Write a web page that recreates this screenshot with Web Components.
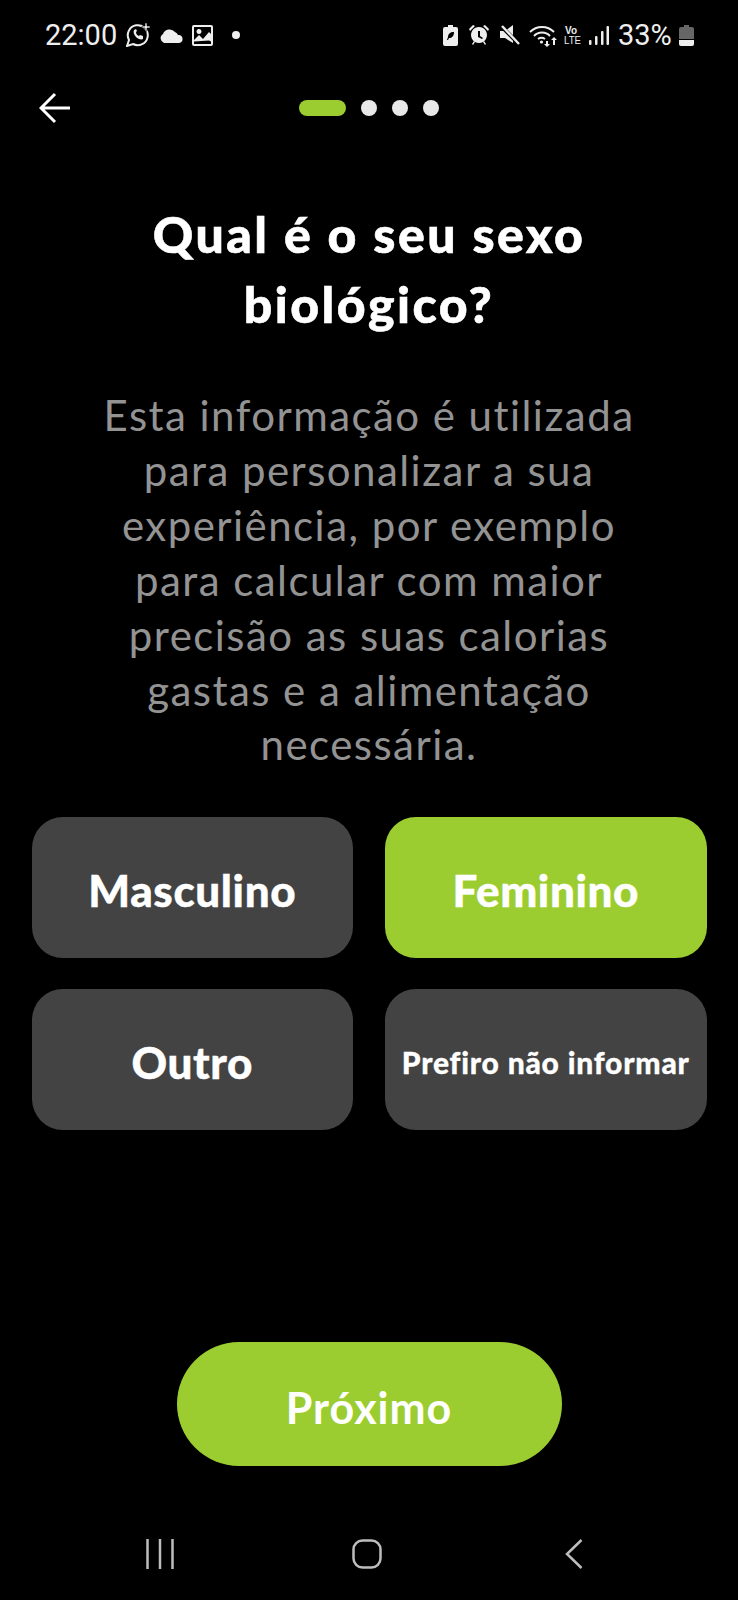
<!DOCTYPE html>
<html lang="pt">
<head>
<meta charset="utf-8">
<title>Sexo biológico</title>
<style>
  html, body { margin: 0; padding: 0; background: #000; }
  body { font-family: "Lato", "Noto Sans", sans-serif; color: #fff; }
</style>
</head>
<body>
<app-screen>
  <status-bar></status-bar>
  <top-nav></top-nav>
  <intro-text>
    <span slot="title">Qual é o seu sexo<br>biológico?</span>
    Esta informação é utilizada<br>para personalizar a sua<br>experiência, por exemplo<br>para calcular com maior<br>precisão as suas calorias<br>gastas e a alimentação<br>necessária.
  </intro-text>
  <choice-grid>
    <choice-button>Masculino</choice-button>
    <choice-button selected>Feminino</choice-button>
    <choice-button>Outro</choice-button>
    <choice-button small>Prefiro não informar</choice-button>
  </choice-grid>
  <next-button>Próximo</next-button>
  <nav-bar></nav-bar>
</app-screen>

<script>
class AppScreen extends HTMLElement {
  constructor() {
    super();
    this.attachShadow({ mode: 'open' });
    this.shadowRoot.innerHTML = `
      <style>
        :host { display: flex; flex-direction: column; width: 738px; height: 1600px; overflow: hidden; background: #000; }
      </style>
      <slot></slot>
    `;
  }
}

class StatusBar extends HTMLElement {
  constructor() {
    super();
    this.attachShadow({ mode: 'open' });
    this.shadowRoot.innerHTML = `
      <style>
        :host { display: flex; align-items: center; height: 70px; padding-left: 45px; color: #eee; font-family: "Roboto", "Liberation Sans", sans-serif; font-size: 29px; }
        svg { display: block; flex: none; fill: #eee; }
        .time { width: 81px; }
        .pct { width: 61px; margin-left: 9px; white-space: nowrap; }
      </style>
      <span class="time">22:00</span>
      <svg width="25" height="24" viewBox="0 0 25 24" style="margin-right:7px"><path d="M1 23l2-6a10 10 0 1 1 4 4z" fill="none" stroke="#eee" stroke-width="2"/><path d="M8 7c-1 2 0 5 2 7s5 3 7 2l0-3-3-1-1 1c-2-1-3-2-3-4l1-1-1-2z"/><path d="M19 0h2v3h3v2h-3v3h-2V5h-3V3h3z" stroke="#000" stroke-width=".6"/></svg>
      <svg width="25" height="15" viewBox="0 0 25 15" style="margin-right:9px"><path d="M6 15a5 5 0 0 1-1-9 7 7 0 0 1 12-2 5 5 0 0 1 3 3 4 4 0 0 1 1 8z"/></svg>
      <svg width="21" height="21" viewBox="0 0 21 21"><path fill-rule="evenodd" d="M2 0h17a2 2 0 0 1 2 2v17a2 2 0 0 1-2 2H2a2 2 0 0 1-2-2V2a2 2 0 0 1 2-2zM2 16.500v2.500h17v-2.500l-2-1zM2 15l5-5 4 4 6-7 2 2V2H2zM7 4a2.500 2.500 0 1 1-.01 0z"/></svg>
      <svg width="8" height="8" viewBox="0 0 8 8" style="margin-left:19px"><circle cx="4" cy="4" r="4"/></svg>
      <span style="flex:1"></span>
      <svg width="15" height="21" viewBox="0 0 15 21"><path fill-rule="evenodd" d="M5 0h5v2h3a2 2 0 0 1 2 2v15a2 2 0 0 1-2 2H2a2 2 0 0 1-2-2V4a2 2 0 0 1 2-2h3zM11 7c-4 0-6 2-6 5l-1 3h1l1-2c3 0 5-2 5-6z"/></svg>
      <svg width="20" height="20" viewBox="0 0 20 20" style="margin-left:11px"><path d="M0 4l4-4 2 1-5 5zM20 4l-4-4-2 1 5 5zM3 19l2-3 1 1-2 3zM17 19l-2-3-1 1 2 3z"/><path fill-rule="evenodd" d="M10 2a8 8 0 1 1-.01 0zM9 6v6l4 2 1-1-3-2V6z"/></svg>
      <svg width="20" height="20" viewBox="0 0 20 20" style="margin-left:11px"><path d="M0 6h5l8-6v18l-8-5H0z"/><path d="M1 1l17 17" stroke="#000" stroke-width="4"/><path d="M2 1l17 18" stroke="#eee" stroke-width="2.400"/></svg>
      <svg width="29" height="23" viewBox="0 0 29 23" style="margin-left:9px"><g fill="none" stroke="#eee" stroke-width="2"><path d="M1 8a17 17 0 0 1 24 0"/><path d="M5 12a11 11 0 0 1 16 0"/><path d="M9 15a6 6 0 0 1 7 0"/></g><circle cx="12.500" cy="18" r="1.600"/><path d="M17 17h2v3h2l-3 3-3-3h2zM25 13l3 3h-2v5h-2v-5h-2z"/></svg>
      <svg width="17" height="18" viewBox="0 0 17 18" style="margin-left:6px"><text x="1" y="8" font-size="10" font-family="Liberation Sans" font-weight="700" fill="#eee">Vo</text><text x="0" y="17.500" font-size="10" font-family="Liberation Sans" fill="#eee" textLength="17" lengthAdjust="spacingAndGlyphs">LTE</text></svg>
      <svg width="20" height="19" viewBox="0 0 20 19" style="margin-left:8px"><rect x="0" y="14" width="2.500" height="5" rx="1"/><rect x="6" y="10" width="2.500" height="9" rx="1"/><rect x="12" y="5" width="2.500" height="14" rx="1"/><rect x="17.500" y="0" width="2.500" height="19" rx="1"/></svg>
      <span class="pct">33%</span>
      <svg width="15" height="21" viewBox="0 0 15 21" style="margin-right:44px"><path fill="#666" d="M5 0h5v2h3a2 2 0 0 1 2 2v10H0V4a2 2 0 0 1 2-2h3z"/><path fill="#eee" d="M0 15h15v4a2 2 0 0 1-2 2H2a2 2 0 0 1-2-2z"/></svg>
    `;
  }
}

class TopNav extends HTMLElement {
  constructor() {
    super();
    this.attachShadow({ mode: 'open' });
    this.shadowRoot.innerHTML = `
      <style>
        :host { display: grid; grid-template-columns: 1fr auto 1fr; align-items: center; height: 76px; padding: 0 39px; }
        svg { display: block; }
        .dots { display: flex; align-items: center; gap: 15px; }
        .dots i { width: 16px; height: 16px; border-radius: 50%; background: #e8e8e8; }
        .dots i.on { width: 47px; border-radius: 8px; background: #9ccd30; }
      </style>
      <svg width="32" height="32" viewBox="0 0 32 32" fill="none" stroke="#fff" stroke-width="3"><path d="M31 16H3M16 2L2 16l14 14"/></svg>
      <div class="dots"><i class="on"></i><i></i><i></i><i></i></div>
      <span></span>
    `;
  }
}

class IntroText extends HTMLElement {
  constructor() {
    super();
    this.attachShadow({ mode: 'open' });
    this.shadowRoot.innerHTML = `
      <style>
        :host { display: block; padding-top: 53px; text-align: center; }
        h1 { margin: 0 0 49px; font-size: 50px; line-height: 70px; font-weight: 900; color: #fff; letter-spacing: 2.500px; -webkit-text-stroke: .6px #fff; }
        p { margin: 0; font-size: 42px; line-height: 54.900px; font-weight: 400; color: #939393; letter-spacing: 1.450px; }
      </style>
      <h1><slot name="title"></slot></h1>
      <p><slot></slot></p>
    `;
  }
}

class ChoiceGrid extends HTMLElement {
  constructor() {
    super();
    this.attachShadow({ mode: 'open' });
    this.shadowRoot.innerHTML = `
      <style>
        :host { display: grid; grid-template-columns: 321.500px 321.500px; grid-auto-rows: 141px; column-gap: 32px; row-gap: 31px; padding: 45px 31.500px 0; }
      </style>
      <slot></slot>
    `;
  }
}

class ChoiceButton extends HTMLElement {
  constructor() {
    super();
    this.attachShadow({ mode: 'open' });
    this.shadowRoot.innerHTML = `
      <style>
        :host { display: flex; align-items: center; justify-content: center; box-sizing: border-box; padding-top: 4px; border-radius: 31px; background: #434343; color: #fff; font-size: 44px; font-weight: 900; letter-spacing: .6px; -webkit-text-stroke: .4px #fff; }
        :host([selected]) { background: #9ccd30; }
        :host([small]) { font-size: 30px; letter-spacing: .8px; -webkit-text-stroke: .3px #fff; }
      </style>
      <slot></slot>
    `;
  }
}

class NextButton extends HTMLElement {
  constructor() {
    super();
    this.attachShadow({ mode: 'open' });
    this.shadowRoot.innerHTML = `
      <style>
        :host { display: flex; align-items: center; justify-content: center; align-self: center; box-sizing: border-box; width: 385px; height: 124px; margin-top: 212px; padding-top: 6px; border-radius: 62px; background: #9ccd30; color: #fff; font-size: 43px; font-weight: 700; letter-spacing: 1px; }
      </style>
      <slot></slot>
    `;
  }
}

class NavBar extends HTMLElement {
  constructor() {
    super();
    this.attachShadow({ mode: 'open' });
    this.shadowRoot.innerHTML = `
      <style>
        :host { display: flex; align-items: center; justify-content: space-between; height: 30px; margin-top: 73px; padding: 0 155px 0 146px; }
        svg { display: block; fill: none; stroke: #bdbdbd; stroke-width: 2.500; }
        .home { margin-right: 6px; }
      </style>
      <svg width="28" height="30" viewBox="0 0 28 30"><path d="M1.500 0v30M14 0v30M26.500 0v30"/></svg>
      <svg class="home" width="30" height="30" viewBox="0 0 30 30"><rect x="1.500" y="1.500" width="27" height="27" rx="9"/></svg>
      <svg width="18" height="30" viewBox="0 0 18 30"><path d="M16.500 1L2 15l14.500 14"/></svg>
    `;
  }
}

customElements.define('app-screen', AppScreen);
customElements.define('status-bar', StatusBar);
customElements.define('top-nav', TopNav);
customElements.define('intro-text', IntroText);
customElements.define('choice-grid', ChoiceGrid);
customElements.define('choice-button', ChoiceButton);
customElements.define('next-button', NextButton);
customElements.define('nav-bar', NavBar);
</script>
</body>
</html>
